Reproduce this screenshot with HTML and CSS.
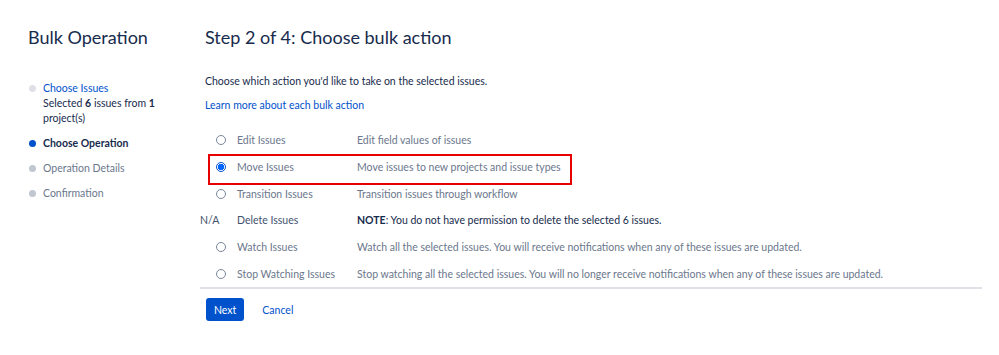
FILE: index.html
```html
<!DOCTYPE html>
<html>
<head>
<meta charset="utf-8">
<link rel="stylesheet" href="styles.css">
</head>
<body>
<div class="page">
  <aside class="side">
    <h1 class="side-title">Bulk Operation</h1>
    <ul class="steps">
      <li class="step done">
        <span class="dot"></span>
        <div class="step-body">
          <a class="step-link" href="#">Choose Issues</a>
          <div class="step-note">Selected <b>6</b> issues from <b>1</b> project(s)</div>
        </div>
      </li>
      <li class="step current">
        <span class="dot"></span>
        <div class="step-body">Choose Operation</div>
      </li>
      <li class="step">
        <span class="dot"></span>
        <div class="step-body">Operation Details</div>
      </li>
      <li class="step">
        <span class="dot"></span>
        <div class="step-body">Confirmation</div>
      </li>
    </ul>
  </aside>
  <main class="main">
    <h2 class="title">Step 2 of 4: Choose bulk action</h2>
    <p class="intro">Choose which action you'd like to take on the selected issues.</p>
    <a class="learn" href="#">Learn more about each bulk action</a>
    <div class="ops">
      <div class="op">
        <span class="op-sel"><span class="radio"></span></span>
        <span class="op-name">Edit Issues</span>
        <span class="op-desc">Edit field values of issues</span>
      </div>
      <div class="op highlight">
        <span class="op-sel"><span class="radio checked"></span></span>
        <span class="op-name">Move Issues</span>
        <span class="op-desc">Move issues to new projects and issue types</span>
      </div>
      <div class="op">
        <span class="op-sel"><span class="radio"></span></span>
        <span class="op-name">Transition Issues</span>
        <span class="op-desc">Transition issues through workflow</span>
      </div>
      <div class="op na">
        <span class="op-sel na-text">N/A</span>
        <span class="op-name">Delete Issues</span>
        <span class="op-desc"><b>NOTE</b>: You do not have permission to delete the selected 6 issues.</span>
      </div>
      <div class="op">
        <span class="op-sel"><span class="radio"></span></span>
        <span class="op-name">Watch Issues</span>
        <span class="op-desc">Watch all the selected issues. You will receive notifications when any of these issues are updated.</span>
      </div>
      <div class="op">
        <span class="op-sel"><span class="radio"></span></span>
        <span class="op-name">Stop Watching Issues</span>
        <span class="op-desc">Stop watching all the selected issues. You will no longer receive notifications when any of these issues are updated.</span>
      </div>
    </div>
    <div class="actions">
      <button class="btn-next">Next</button>
      <a class="cancel" href="#">Cancel</a>
    </div>
  </main>
</div>
</body>
</html>
```

FILE: styles.css
```css
* { box-sizing: border-box; }
html, body { margin: 0; padding: 0; background: #fff; }
body {
  font-family: Lato, "Noto Sans", sans-serif;
  font-size: 10.5px;
  color: #172B4D;
}
a { text-decoration: none; color: #0052CC; }
.page {
  display: flex;
  padding: 0 17px 0 28px;
}
.side {
  width: 177px;
  flex: none;
}
.side-title {
  margin: 26px 0 0;
  font-size: 18px;
  font-weight: 400;
  line-height: 22px;
  color: #172B4D;
}
.steps {
  list-style: none;
  margin: 33px 0 0;
  padding: 0;
}
.step {
  display: flex;
  align-items: flex-start;
  color: #6B778C;
  line-height: 15px;
  margin-bottom: 10px;
}
.step-body { max-width: 120px; }
.dot {
  width: 7px;
  height: 7px;
  border-radius: 50%;
  background: #C1C7D0;
  margin: 4px 7px 0 1px;
  flex: none;
}
.step.done .dot { background: #DFE1E6; }
.step.current .dot { background: #0052CC; }
.step.current { color: #172B4D; font-weight: 700; }
.step-link { color: #0052CC; }
.step-note { color: #172B4D; }
.step-note b { font-weight: 700; }
.main {
  flex: 1;
}
.title {
  margin: 26px 0 0;
  font-size: 18px;
  font-weight: 400;
  line-height: 22px;
  color: #172B4D;
}
.intro {
  margin: 26px 0 0;
  line-height: 14px;
  color: #172B4D;
}
.learn {
  display: inline-block;
  margin-top: 10px;
  line-height: 14px;
}
.ops {
  margin-top: 15px;
  margin-left: -5px;
  border-bottom: 2px solid #DFE1E6;
  padding-bottom: 0;
}
.op {
  position: relative;
  display: flex;
  align-items: center;
  height: 26.7px;
  color: #6B778C;
}
.op-sel {
  width: 37px;
  flex: none;
  display: flex;
  justify-content: flex-start;
  padding-left: 16px;
}
.op-sel.na-text { color: #42526E; padding-left: 0; }
.op.na .op-name { color: #42526E; }
.op.na .op-desc { color: #172B4D; }
.op-name {
  width: 120px;
  flex: none;
}
.op-desc { white-space: nowrap; }
.radio {
  display: block;
  width: 10px;
  height: 10px;
  border-radius: 50%;
  border: 1px solid #7A869A;
  background: #fff;
}
.radio.checked {
  border-color: #0052CC;
  background: radial-gradient(circle, #0065FF 0 3px, #fff 3.5px);
}
.op.highlight::after {
  content: "";
  position: absolute;
  left: 8px;
  top: 0;
  width: 360px;
  height: 27px;
  border: 2px solid #E60000;
  pointer-events: none;
}
.actions {
  display: flex;
  align-items: center;
  margin-top: 9px;
  padding-left: 1px;
}
.btn-next {
  font-family: inherit;
  font-size: 10.5px;
  background: #0052CC;
  color: #fff;
  border: 0;
  border-radius: 3px;
  height: 23px;
  padding: 0 8px;
  font-weight: 400;
}
.cancel {
  margin-left: 18px;
}
```
